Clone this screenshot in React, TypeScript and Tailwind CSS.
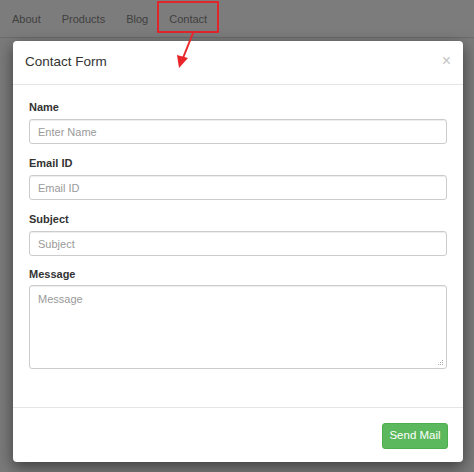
import React from "react";

export default function App() {
  const font = { fontFamily: '"Liberation Sans", Arial, sans-serif' };
  return (
    <div className="relative w-[474px] h-[472px] overflow-hidden bg-[#7a7a7a]" style={font}>
      {/* nav bar */}
      <div className="h-[38px] border-b border-[#6b6b6b] bg-[#7c7c7c] flex items-center pl-[12px] gap-[21px] text-[11px] text-[#404040]">
        <span className="pt-[1px]">About</span>
        <span className="pt-[1px]">Products</span>
        <span className="pt-[1px]">Blog</span>
        <span className="relative pt-[1px]">
          Contact
          <span className="absolute left-[-12px] right-[-12px] top-[-9px] bottom-[-6px] border-2 border-[#e0252b]" />
        </span>
      </div>
      {/* arrow annotation */}
      <svg className="absolute left-0 top-0 z-20" width="474" height="80" viewBox="0 0 474 80">
        <line x1="193" y1="33" x2="183" y2="58" stroke="#e8262a" strokeWidth="2" />
        <polygon points="179,68 177,55 188,58" fill="#e8262a" />
      </svg>
      {/* modal */}
      <div className="absolute left-[13px] top-[41px] w-[450px] h-[421px] bg-white rounded-[4px] shadow-[0_5px_15px_rgba(0,0,0,0.5)] flex flex-col">
        <div className="h-[44px] border-b border-[#e5e5e5] flex items-center justify-between pl-[12px] pr-[12px]">
          <span className="text-[13.5px] text-[#333]">Contact Form</span>
          <span className="text-[16px] leading-none text-[#c4c4c4] -mt-[4px]">×</span>
        </div>
        <div className="flex-1 px-[16px] pt-[15px] flex flex-col gap-[12px] border-b border-[#e5e5e5]">
          {[
            ["Name", "Enter Name"],
            ["Email ID", "Email ID"],
            ["Subject", "Subject"],
          ].map(([label, ph]) => (
            <div key={label} className="flex flex-col">
              <label className="text-[11px] font-bold text-[#333] leading-[14px] mb-[5px]">{label}</label>
              <input
                placeholder={ph}
                className="h-[25px] w-full rounded-[3px] border border-[#cccccc] px-[8px] text-[11px] text-[#555] placeholder:text-[#9a9a9a] shadow-[inset_0_1px_1px_rgba(0,0,0,0.075)] outline-none"
                style={font}
              />
            </div>
          ))}
          <div className="flex flex-col -mt-[1px]">
            <label className="text-[11px] font-bold text-[#333] leading-[14px] mb-[4px]">Message</label>
            <div className="relative">
              <textarea
                placeholder="Message"
                className="block h-[84px] w-full resize-none rounded-[3px] border border-[#cccccc] px-[8px] py-[5px] text-[11px] text-[#555] placeholder:text-[#9a9a9a] shadow-[inset_0_1px_1px_rgba(0,0,0,0.075)] outline-none"
                style={font}
              />
              <svg className="absolute right-[3px] bottom-[3px]" width="7" height="7" viewBox="0 0 7 7">
                <rect x="5" y="1" width="1" height="1" fill="#aaa" />
                <rect x="3" y="3" width="1" height="1" fill="#aaa" />
                <rect x="5" y="3" width="1" height="1" fill="#aaa" />
                <rect x="1" y="5" width="1" height="1" fill="#aaa" />
                <rect x="3" y="5" width="1" height="1" fill="#aaa" />
                <rect x="5" y="5" width="1" height="1" fill="#aaa" />
              </svg>
            </div>
          </div>
        </div>
        <div className="h-[54px] flex items-start justify-end pt-[15px] pr-[15px]">
          <button
            className="h-[26px] w-[66px] rounded-[3px] bg-[#5cb85c] border border-[#4cae4c] text-white text-[11.5px]"
            style={font}
          >
            Send Mail
          </button>
        </div>
      </div>
    </div>
  );
}
